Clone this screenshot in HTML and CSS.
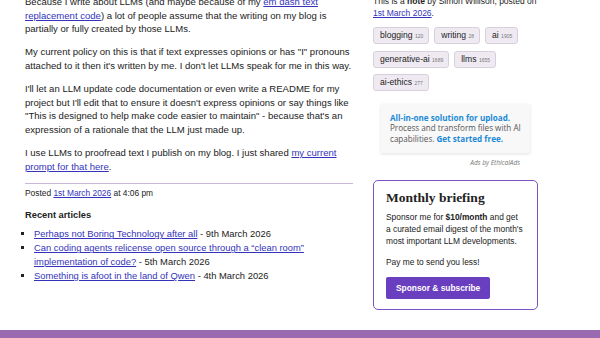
FILE: index.html
```html
<!DOCTYPE html>
<html>
<head>
    <link rel="stylesheet" href="styles.css">
</head>
<body>
    <div class="page">
        <!-- Entry -->
        <div class="entry">
            <p>Because I write about LLMs (and maybe because of my <a href="#">em dash text replacement code</a>) a lot of people assume that the writing on my blog is partially or fully created by those LLMs.</p>
            <p>My current policy on this is that if text expresses opinions or has "I" pronouns attached to it then it's written by me. I don't let LLMs speak for me in this way.</p>
            <p>I'll let an LLM update code documentation or even write a README for my project but I'll edit that to ensure it doesn't express opinions or say things like "This is designed to help make code easier to maintain" - because that's an expression of a rationale that the LLM just made up.</p>
            <p>I use LLMs to proofread text I publish on my blog. I just shared <a href="#">my current prompt for that here</a>.</p>

            <div class="entry-footer">
                Posted <a href="#">1st March 2026</a> at 4:06 pm
            </div>

            <div class="recent-articles">
                <h2>Recent articles</h2>
                <ul>
                    <li><a href="#">Perhaps not Boring Technology after all</a> - 9th March 2026</li>
                    <li><a href="#">Can coding agents relicense open source through a “clean room” implementation of code?</a> - 5th March 2026</li>
                    <li><a href="#">Something is afoot in the land of Qwen</a> - 4th March 2026</li>
                </ul>
            </div>
        </div>

        <!-- Sidebar -->
        <div class="sidebar">
            <p class="meta">This is a <strong>note</strong> by Simon Willison, posted on <a href="#">1st March 2026</a>.</p>

            <div class="tags">
                <a class="tag" href="#">blogging <span>120</span></a>
                <a class="tag" href="#">writing <span>28</span></a>
                <a class="tag" href="#">ai <span>1905</span></a>
                <a class="tag" href="#">generative-ai <span>1689</span></a>
                <a class="tag" href="#">llms <span>1655</span></a>
                <a class="tag" href="#">ai-ethics <span>277</span></a>
            </div>

            <div class="ad">
                <div class="ad-box">
                    <a href="#" class="ad-link">All-in-one solution for upload.</a>
                    Process and transform files with AI capabilities. <a href="#" class="ad-link">Get started free.</a>
                </div>
                <div class="ad-by">Ads by EthicalAds</div>
            </div>

            <div class="briefing">
                <h3>Monthly briefing</h3>
                <p>Sponsor me for <strong>$10/month</strong> and get<br>a curated email digest of the month's most important LLM developments.</p>
                <p class="less">Pay me to send you less!</p>
                <a href="#" class="btn">Sponsor &amp; subscribe</a>
            </div>
        </div>
    </div>

    <div class="footer"></div>
</body>
</html>
```

FILE: styles.css
```css
body {
    margin: 0;
    font-family: "Liberation Sans", Arial, sans-serif;
    color: #222;
    background-color: #fff;
}

a {
    color: #3333bb;
}

.page {
    display: flex;
    gap: 20px;
    margin-top: -5px;
    padding-left: 25px;
}

.entry {
    width: 328px;
    font-size: 9.55px;
    line-height: 13.6px;
}

.entry p {
    margin: 0 0 9.6px 0;
}

.entry-footer {
    border-top: 1px solid #c9b6d9;
    margin-top: 10px;
    padding-top: 3px;
    font-size: 8.4px;
}

.recent-articles h2 {
    font-size: 9.3px;
    line-height: 13.5px;
    margin: 8px 0 5px 0;
}

.recent-articles ul {
    list-style-type: square;
    margin: 0;
    padding-left: 9px;
    font-size: 9.4px;
    line-height: 13.5px;
}

.recent-articles li {
    margin-bottom: 0.5px;
}

.sidebar {
    width: 165px;
    font-size: 8.5px;
    line-height: 12px;
}

.meta {
    margin: 0 0 8px 0;
}

.tags {
    display: flex;
    flex-wrap: wrap;
    gap: 6.5px 5px;
    width: 160px;
}

.tag {
    display: inline-block;
    background-color: #efeaf2;
    border: 1px solid #d8cfdd;
    border-radius: 3px;
    padding: 1px 5px 1px 6px;
    color: #222;
    text-decoration: none;
    font-size: 8.6px;
    line-height: 12px;
}

.tag span {
    font-size: 5px;
    color: #777;
}

.ad {
    margin: 13px 0 0 8px;
    width: 149px;
    font-family: "Open Sans", "Noto Sans", sans-serif;
}

.ad-box {
    background-color: #f8f8f8;
    box-shadow: 0 1px 3px rgba(0, 0, 0, 0.12);
    padding: 8.5px 8px 8.5px 9px;
    font-size: 8.1px;
    line-height: 10.5px;
    color: #555;
}

.ad-link {
    color: #1c8ad6;
    font-weight: bold;
    text-decoration: none;
}

.ad-by {
    text-align: right;
    font-size: 6.5px;
    line-height: 12px;
    font-style: italic;
    color: #777;
    margin: 4px 10px 0 0;
}

.briefing {
    margin-top: 11px;
    border: 1px solid #7e52c2;
    border-radius: 5px;
    padding: 9.5px 12px 10px 12px;
    font-size: 8.4px;
    line-height: 12px;
}

.briefing h3 {
    font-family: "Liberation Serif", Georgia, serif;
    font-size: 13.5px;
    line-height: 16px;
    margin: 0 0 5px 0;
}

.briefing p {
    margin: 0 0 8.5px 0;
}

.briefing .less {
    margin-bottom: 9.5px;
}

.btn {
    display: inline-block;
    background-color: #6a3fbf;
    color: white;
    font-weight: bold;
    text-decoration: none;
    padding: 5px 10px;
    border-radius: 2px;
    font-size: 8.4px;
}

.footer {
    margin-top: 20px;
    height: 30px;
    background-color: #9a6bb0;
}
```
